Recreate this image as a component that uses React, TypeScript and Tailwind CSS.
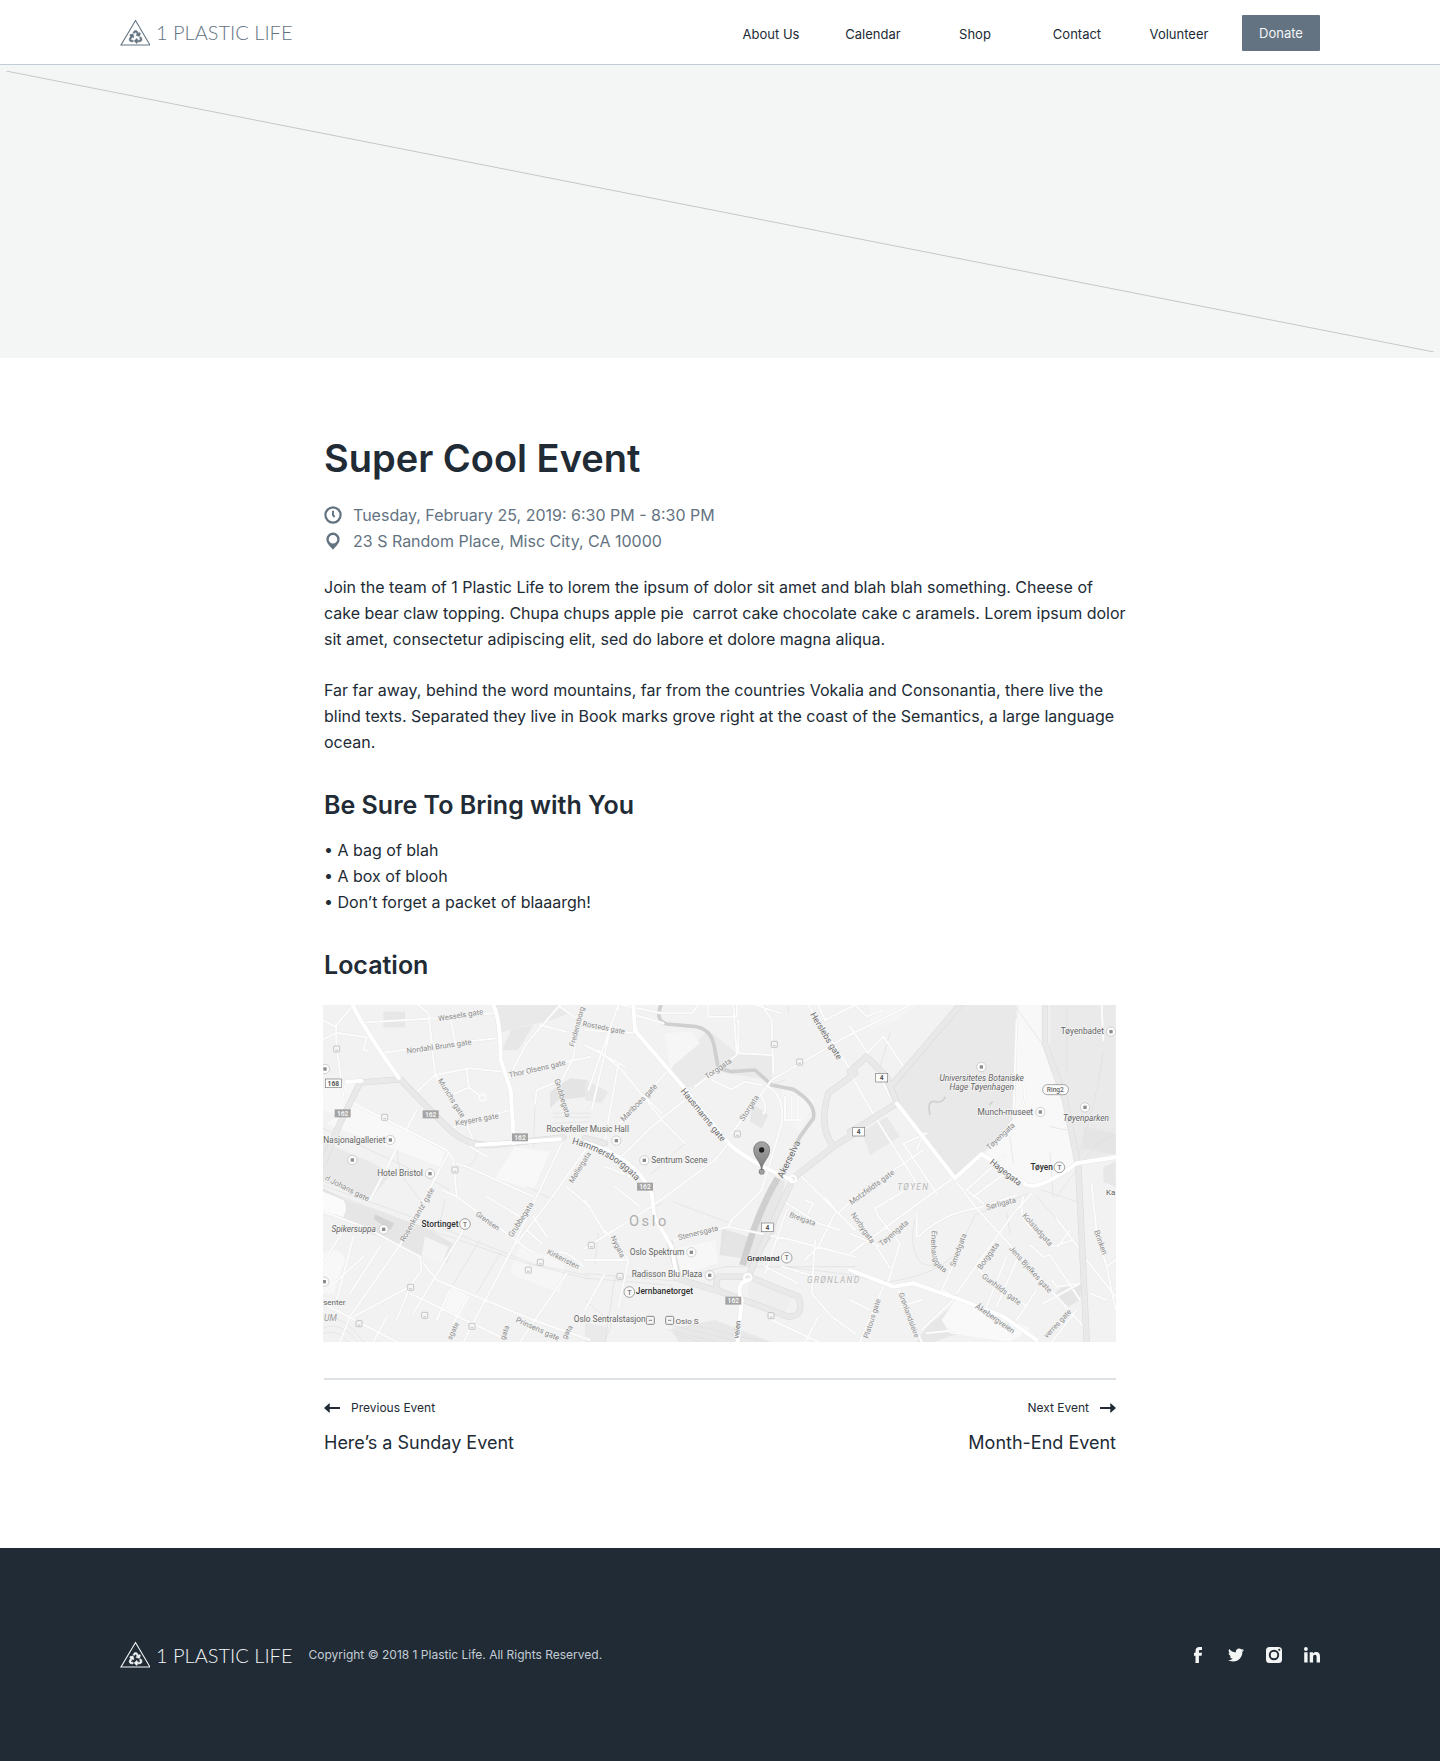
import type { ReactNode } from "react";
import { FaTwitter } from "react-icons/fa";

const NAV = ["About Us", "Calendar", "Shop", "Contact", "Volunteer"];

/* ---------- Brand ---------- */

function Logo({ className }: { className: string }) {
  return (
    <a href="#home" className={`flex items-center gap-[6px] ${className}`}>
      <svg viewBox="0 0 30 27" className="h-[27px] w-[30px]" aria-hidden="true">
        <path d="M15.500 1.500 30 26H1Z" fill="none" stroke="currentColor" strokeWidth="1.1" />
        <g transform="translate(9.2 11.600) scale(0.025)">
          <path
            fill="currentColor"
            stroke="currentColor"
            strokeWidth="26"
            d="M184.561 261.903c3.232 13.997-12.123 24.635-24.068 17.168l-40.736-25.455-50.867 81.402C55.606 356.273 70.96 384 96.012 384H148c6.627 0 12 5.373 12 12v40c0 6.627-5.373 12-12 12H96.115c-75.334 0-121.302-83.048-81.408-146.88l50.822-81.388-40.725-25.448c-12.081-7.547-8.966-25.961 4.879-29.158l110.237-25.45c8.611-1.988 17.201 3.381 19.189 11.99l25.452 110.237zm98.561-182.915l41.289 66.076-40.74 25.457c-12.051 7.528-9 25.953 4.879 29.158l110.237 25.45c8.672 1.999 17.215-3.438 19.189-11.99l25.45-110.237c3.197-13.844-11.99-24.719-24.068-17.168l-40.687 25.424-41.263-66.082c-37.521-60.033-125.209-60.171-162.816 0l-17.963 28.766c-3.51 5.62-1.8 13.021 3.82 16.533l33.919 21.195c5.62 3.512 13.024 1.803 16.536-3.817l17.961-28.743c12.712-20.341 41.973-19.676 54.257-.022zM497.288 301.12l-27.515-44.065c-3.511-5.623-10.916-7.334-16.538-3.821l-33.861 21.159c-5.62 3.512-7.33 10.915-3.818 16.536l27.564 44.112c13.257 21.211-2.057 48.96-27.136 48.96H320V336.02c0-14.213-17.242-21.383-27.313-11.313l-80 79.981c-6.249 6.248-6.249 16.379 0 22.627l80 79.989C302.689 517.308 320 510.3 320 495.989V448h95.88c75.274 0 121.335-82.997 81.408-146.88z"
          />
        </g>
      </svg>
      <span className="font-['Lato'] text-[20px] leading-[26px] font-light whitespace-nowrap">1 PLASTIC LIFE</span>
    </a>
  );
}

/* ---------- Icons ---------- */

function ClockIcon() {
  return (
    <svg viewBox="0 0 18 18" className="size-[18px] shrink-0" fill="none" stroke="currentColor" aria-hidden="true">
      <circle cx="9" cy="9" r="7.6" strokeWidth="2.2" />
      <path d="M9 4.8V9.2L10.6 11" strokeWidth="1.9" />
    </svg>
  );
}

function PlaceIcon() {
  return (
    <svg viewBox="0 0 18 18" className="size-[18px] shrink-0" fill="currentColor" aria-hidden="true">
      <path
        fillRule="evenodd"
        d="M9 .6A6.600 6.600 0 0 0 2.400 7.200C2.400 11.200 5.600 13.600 9 17.800 12.400 13.600 15.600 11.200 15.600 7.200A6.600 6.600 0 0 0 9 .6ZM9 2.900A4.300 4.300 0 1 1 9 11.500 4.300 4.300 0 0 1 9 2.900Z"
      />
    </svg>
  );
}

function ArrowIcon({ flip = false }: { flip?: boolean }) {
  return (
    <svg viewBox="0 0 16 10" className="h-[10px] w-[16px] shrink-0" fill="currentColor" aria-hidden="true">
      <path
        d={
          flip
            ? "M16 5 10.400 0Q10 2 10.400 4H0V6H10.400Q10 8 10.400 10Z"
            : "M0 5 5.600 0Q6 2 5.600 4H16V6H5.600Q6 8 5.600 10Z"
        }
      />
    </svg>
  );
}

function FacebookIcon() {
  return (
    <svg viewBox="0 0 16 16" className="size-4" fill="currentColor" aria-hidden="true">
      <path d="M5.500 16V8.700H4V5.800H5.500V4C5.500 1.400 6.900 0 9.300 0H12V2.900H10.200C9.300 2.900 8.900 3.300 8.900 4.100V5.800H12L11.600 8.700H8.900V16Z" />
    </svg>
  );
}

function InstagramIcon() {
  return (
    <svg viewBox="0 0 16 16" className="size-4" fill="currentColor" aria-hidden="true">
      <path
        fillRule="evenodd"
        d="M3.500 0H12.500A3.500 3.500 0 0 1 16 3.500V12.500A3.500 3.500 0 0 1 12.500 16H3.500A3.500 3.500 0 0 1 0 12.500V3.500A3.500 3.500 0 0 1 3.500 0ZM8 2.800A5.200 5.200 0 1 0 8 13.200 5.200 5.200 0 0 0 8 2.800ZM13.300 1.700A1.100 1.100 0 1 0 13.300 3.900 1.100 1.100 0 0 0 13.300 1.700Z"
      />
      <circle cx="8" cy="8" r="3.300" />
    </svg>
  );
}

function LinkedInIcon() {
  return (
    <svg viewBox="0 0 16 16" className="size-4" fill="currentColor" aria-hidden="true">
      <circle cx="1.900" cy="2" r="1.900" />
      <path d="M.2 5.200H3.600V15.400H.2ZM5.700 5.200H8.900V6.600C9.500 5.600 10.600 4.900 12.100 4.900 15 4.900 16 6.700 16 9.400V15.400H12.600V9.900C12.600 8.600 12.200 7.800 11 7.800 9.700 7.800 9.100 8.700 9.100 10V15.400H5.700Z" />
    </svg>
  );
}

/* ---------- Map ---------- */

const SHEETS = [0, 795, 1590];

type Shape = [string, string];

const AREAS: Shape[][] = [
  [
    ["M520 15H722L745 40 690 62 640 72 575 88 535 100Z", "#e9e9e9"],
    ["M575 88 640 75 595 150H545Z", "#e7e7e7"],
    ["M190 35H255V82H190Z", "#e7e7e7"],
    ["M55 345 95 300 375 455 360 500 230 450 20 372Z", "#f8f8f8"],
    ["M9 265 110 250 60 350 9 330Z", "#f7f7f7"],
    ["M9 425 160 490 215 520 150 600 9 545Z", "#e9e9e9"],
    ["M9 565 80 600 330 690 405 735 380 790 300 765 150 700 9 625Z", "#e6e6e6"],
    ["M9 575 70 600Q85 620 70 652L9 632Z", "#fbfbfb"],
    ["M165 643 222 670 212 690 162 658Z", "#d4d4d4"],
    ["M315 710 385 740 365 795 305 765Z", "#f4f4f4"],
    ["M585 440 690 455 640 570 525 535Z", "#f8f8f8"],
    ["M690 275 750 235 803 240V290L715 300 690 325Z", "#e4e4e4"],
    ["M600 735 735 790 720 880 570 820Z", "#f6f6f6"],
    ["M9 760Q60 735 75 780L40 880H9Z", "#f8f8f8"],
    ["M395 860 450 890 420 950 370 930Z", "#f8f8f8"],
  ],
  [
    ["M0 240 70 275 50 310 0 300Z", "#e8e8e8"],
    ["M250 205 330 130 370 90 450 155 565 165 560 240 500 232 400 215 330 262H290Z", "#eaeaea"],
    ["M240 100 320 95 345 130 255 205Z", "#f6f6f6"],
    ["M500 310 550 345 530 385 495 365Z", "#e7e7e7"],
    ["M410 685 490 710 470 775 405 765Z", "#e5e5e5"],
    ["M600 545 570 700 495 800 460 795 520 650 580 535Z", "#e7e7e7"],
    ["M255 750 390 720 400 790 270 830Z", "#f7f7f7"],
    ["M490 845 625 885 600 935 490 910Z", "#eeeeee"],
    ["M260 985 390 960 560 1026H280Z", "#e8e8e8"],
    ["M0 970 70 980 60 1026H0Z", "#eaeaea"],
    ["M590 250 690 300 640 400 590 330Z", "#f5f5f5"],
  ],
  [
    ["M330 15H500L495 350 480 400 395 460 315 530 150 310 130 255Z", "#e9e9e9"],
    ["M505 15H578L585 130 645 300 680 490 560 560 520 545 400 465 495 350Z", "#f8f8f8"],
    ["M600 15H797V460L690 485 660 320 600 140Z", "#eaeaea"],
    ["M760 500 797 485V560L760 545Z", "#e7e7e7"],
    ["M35 395 110 350 150 410 60 465Z", "#e9e9e9"],
    ["M60 15H200L140 60 60 90Z", "#f5f5f5"],
    ["M230 980 330 900 480 960 420 1005 330 1000 250 1026H200Z", "#e7e7e7"],
    ["M320 895 540 985 480 1026 300 1000 275 960Z", "#f9f9f9"],
    ["M615 880Q650 840 695 850L690 900 655 920Z", "#e5e5e5"],
    ["M700 380 797 400V465L700 445Z", "#e5e5e5"],
  ],
];

const THIN = [
  "M9 570 330 690 620 790 810 838 M9 556 335 672 640 792 810 828 M50 110 65 260 M9 385 300 520 390 570 M230 440 240 520 300 600 M440 500Q480 480 470 440 M375 600 365 650 330 700 M645 320 640 440 M480 720 395 860 M540 760 470 880 M620 560 700 600 M9 985Q60 960 115 1026 M9 1000Q50 985 85 1026 M700 340H810 M700 352H810 M700 370 810 365 M15 950Q80 950 130 1026",
  "M0 820 260 842 420 800 810 800 M0 834 260 856 M265 606 430 668 M300 430 200 520 M610 20V40 M260 960 540 1026 M255 975 470 1026 M250 990 400 1026 M0 900 80 970 60 1026 M90 830 60 1026 M420 690 405 765 M600 800 810 826 M40 700 30 790 M170 640 230 610 M540 260 600 240 M260 1000 350 1026",
  "M500 25 575 130 M0 830 120 845Q300 820 340 720L375 645 535 580 M797 405 740 430 620 590 M760 160Q730 350 680 480 M575 570 680 605 M480 410 490 490 M600 380 650 390 M610 590 600 460 M200 640Q170 740 215 790L290 810 M120 100 90 200 M650 20V220 M470 640 480 700 M745 440 797 380 M560 590 640 680",
];

const STREETS = [
  "M9 60 45 80 100 15 M48 80 50 140 70 290 M9 118 50 98 140 112 130 150 145 152 M105 15 118 68 350 55 520 40 M185 160 345 135 530 115 M295 15 325 40 330 80 345 225 280 285 M345 225 450 205 550 215 M345 225 395 285 447 262 440 210 M447 262 480 287 M390 50 405 125 M350 240 435 360 465 435 M400 382 570 330 M720 15 620 130 565 235 645 215 720 190 810 170 M720 20 775 60 760 175 725 240 650 270 645 310 M660 75 740 95 M80 300 380 450 400 480 410 590 640 760 M150 600 290 330 M240 735 385 460 M450 440 500 470 M410 490 440 500 640 590 M365 570 410 590 M9 635 130 680 300 770 305 810 270 860 100 950 M310 790 350 840 640 960 810 1020 M240 735 90 950 60 1026 M430 690 280 940 M725 430 580 740 430 1026 M810 430 690 600 590 730 M740 820 600 1026 M65 700 9 790 M100 710 50 900 M130 770 9 880 M180 740 90 880 M270 860 230 960 M270 880 560 1020 M640 650 680 710 M620 690 665 730 M740 560 810 620 M500 590 600 650 M390 870 350 960 M445 890 400 970 M660 787Q720 720 790 800 M200 950 160 1026 M9 910 230 1026",
  "M0 90 150 100 M100 15 10 270 M100 15V30 M80 70 20 330 M0 135 120 200 M40 150 110 210 240 370 300 430 M100 190 60 420 M100 375 260 200 M180 290 230 340 M110 15 230 40H320L340 15 M150 45 235 70 M370 15V50H455V15 M530 15 560 60 M460 60V160L560 165 M330 260 455 165 M380 240 440 268 480 245 530 255 M440 400 560 240 810 95 M445 15 455 160 M560 60 565 220 M510 15 590 40 M670 15 800 215 M550 260Q600 290 590 370L555 490 M430 430 390 480 200 620 0 745 M555 490 530 570 440 660 430 680 M110 470 200 380 300 300 M110 470 60 440 M90 560 165 620 M0 600 60 700 M130 780 60 690 M60 500 160 540 M270 720 430 680 620 720 810 770 M590 600 700 670 765 690 M660 600 685 610 670 640 M605 630 540 820 M750 640 700 740 660 780 M540 800 640 850 M600 290V360H650 M620 290V360 M638 290V360 M530 290Q550 330 535 340 M640 520 720 600 810 690 M720 590 760 640 810 590 M0 780 130 780 120 830 100 920 M0 930 60 820 M690 720 680 880 740 950 810 1000 M700 950 660 1026 M590 800 690 830 M560 960 700 1026 M700 15 720 60 810 15",
  "M0 105 180 15 M15 15 50 50 100 30 M0 80 60 170 130 310 M160 200 100 110 50 160 M0 220 75 350 200 550 M0 600 220 450 M75 625 200 550 M75 625 85 650 150 730 110 860 M315 530 0 760 M200 640V710 M205 710Q280 640 380 625 M315 540 380 625 710 990 M350 570 460 470 M370 590 480 510 M350 570 400 610 M380 625 500 585 M160 430 260 580 M160 430 230 400 M0 700 90 740 M80 740 120 805 M490 640 320 880 M490 640 545 580 M520 590Q500 650 550 690L610 740 670 720 M470 770 410 920 M500 780 440 920 M560 870 500 960 M345 720 275 870 300 880 M540 735 580 770 600 765 690 900 M385 810 530 920 M690 750 620 655 M580 910 690 850 M605 1026 680 930 M725 550 740 700 770 800 797 930 M710 780 797 890 M770 800 797 780 M720 880 770 900 M0 900 60 930 M100 860 30 1026 M145 870 215 1026 M150 920 215 900 M320 890 215 990 M230 1000 320 990 M605 840 620 860 690 850 M500 60 490 350 M755 15 760 120 M520 260Q540 300 490 350 M660 690 625 740 M200 450 220 400",
];

const HIGHWAYS = [
  "M9 490 60 370 120 248 240 238 385 385Q440 440 520 435L730 412",
  "M0 415 60 430 M810 220 730 280Q700 380 745 440L630 530 M745 440 810 400 M620 545 530 740 490 830 400 830Q380 870 420 880L610 950Q660 950 640 890L490 830 M275 835 420 880 M255 730 280 830",
  "M330 15 130 250 M0 215 50 170 110 230 140 310 30 380 0 395 M585 15V130L645 300 685 500 710 1026",
];

const MAJOR = [
  "M98 15Q140 100 237 234 M520 15Q542 60 542 180L572 270 582 430 M80 246 125 242 M470 435 720 418",
  "M145 15 150 92 290 255 430 430Q490 485 620 540 M0 428Q150 470 200 580 M200 580 208 650 260 740 275 830 M490 840Q450 850 470 900L458 1026",
  "M140 310 315 535 395 462 530 555Q570 570 680 490L797 472 M0 810 130 860 190 850 320 895 460 950 560 1020",
];

type Tone = "street" | "place" | "dark" | "road" | "area";
type Label = [string, number, number, number, number, Tone, boolean?];

const LABELS: Label[][] = [
  [
    ["Wessels gate", 423, 53, -9, 23, "street"],
    ["Nordahl Bruns gate", 358, 147, -8, 23, "street"],
    ["Thor Olsens gate", 653, 214, -13, 23, "street"],
    ["Fredensborg", 778, 82, -75, 22, "street"],
    ["Munchs gate", 388, 298, 58, 23, "street"],
    ["Keysers gate", 472, 366, -10, 23, "street"],
    ["Grubbegata", 720, 296, 73, 23, "street"],
    ["Rockefeller Music Hall", 803, 396, 0, 25, "place"],
    ["Møllergata", 786, 506, -58, 22, "street"],
    ["Nasjonalgalleriet", 103, 428, 0, 25, "place"],
    ["Hotel Bristol", 240, 529, 0, 25, "place"],
    ["rl Johans gate", 78, 572, 27, 23, "street"],
    ["Rosenkrantz’ gate", 298, 648, -60, 23, "street"],
    ["Grensen", 499, 669, 35, 22, "street"],
    ["Grubbegata", 609, 663, -57, 23, "street"],
    ["Stortinget", 360, 680, 0, 25, "dark"],
    ["Spikersuppa", 101, 696, 0, 25, "place", true],
    ["Kirkeristen", 726, 784, 27, 22, "street"],
    ["senter", 43, 915, 0, 24, "place"],
    ["UM", 31, 962, 0, 26, "area", true],
    ["Prinsens gate", 650, 994, 24, 23, "street"],
    ["gata", 748, 1000, -60, 22, "street"],
    ["gata", 561, 1000, -70, 22, "street"],
    ["sgate", 406, 996, -65, 22, "street"],
    ["Oslo Sentralstasjon", 869, 967, 0, 25, "place"],
  ],
  [
    ["Rosteds gate", 55, 90, 11, 22, "street"],
    ["Mariboes gate", 167, 313, -46, 23, "street"],
    ["Hausmanns gate", 348, 350, 51, 26, "road"],
    ["Torggata", 404, 212, -34, 23, "street"],
    ["Storgata", 499, 328, -57, 23, "street"],
    ["Herslebs gate", 716, 112, 59, 26, "road"],
    ["Sentrum Scene", 283, 489, 0, 25, "place"],
    ["Akerselva", 620, 482, -64, 28, "road"],
    ["Stenersgata", 341, 706, -14, 23, "street"],
    ["Nygata", 92, 743, 63, 22, "street"],
    ["Breigata", 650, 664, 20, 22, "street"],
    ["Oslo Spektrum", 216, 764, 0, 25, "place"],
    ["Grønland", 535, 782, 0, 24, "dark"],
    ["Radisson Blu Plaza", 246, 832, 0, 25, "place"],
    ["Jernbanetorget", 238, 882, 0, 25, "dark"],
    ["Oslo S", 306, 972, 0, 24, "place"],
    ["veien", 464, 990, -82, 23, "road"],
  ],
  [
    ["Tøyenbadet", 697, 103, 0, 25, "place"],
    ["Universitetes Botaniske", 395, 243, 0, 25, "place", true],
    ["Hage Tøyenhagen", 395, 270, 0, 25, "place", true],
    ["Munch-museet", 466, 344, 0, 25, "place"],
    ["Tøyenparken", 708, 364, 0, 25, "place", true],
    ["Tøyengata", 457, 414, -43, 23, "street"],
    ["Hagegata", 462, 524, 38, 26, "road"],
    ["Tøyen", 575, 511, 0, 25, "dark"],
    ["Sørligata", 455, 618, -15, 23, "street"],
    ["Motzfeldts gate", 70, 568, -36, 23, "street"],
    ["Norbygata", 32, 688, 55, 23, "street"],
    ["Tøyengata", 136, 705, -40, 23, "street"],
    ["Smedgata", 332, 753, -70, 23, "street"],
    ["Borggata", 421, 772, -54, 23, "street"],
    ["Kolstadgata", 557, 694, 48, 23, "street"],
    ["Jens Bjelkes gate", 536, 813, 48, 23, "street"],
    ["Gunhilds gate", 450, 874, 37, 23, "street"],
    ["Åkebergveien", 431, 962, 35, 23, "street"],
    ["Grønlandsleire", 170, 948, 70, 22, "street"],
    ["Platous gate", 73, 958, -72, 22, "street"],
    ["verres gate", 628, 976, -47, 22, "street"],
    ["Brinken", 745, 730, 70, 23, "street"],
    ["Ka", 782, 586, 0, 24, "place"],
  ],
];

const TONES: Record<Tone, string> = {
  street: "#8c8c8c",
  place: "#636363",
  dark: "#2f2f2f",
  road: "#6c6c6c",
  area: "#9a9a9a",
};

const STOPS: [number, number][] = [
  [50, 147], [194, 352], [405, 510], [661, 787], [625, 810], [272, 862], [314, 946], [117, 971], [456, 979],
  [1363, 133], [1439, 186], [1252, 402], [814, 736], [900, 829], [1353, 947],
];

const POIS: [number, number][] = [
  [15, 207], [211, 420], [97, 480], [330, 521], [191, 688], [13, 845],
  [889, 422], [973, 481], [1114, 757], [1169, 826],
  [1984, 201], [2373, 95], [2161, 336], [2295, 322],
];

const METROS: [number, number][] = [[435, 672], [1400, 773], [928, 876], [2218, 502]];
const SHIELDS: [number, number][] = [[68, 340], [332, 343], [600, 412], [975, 560], [1240, 902]];
const ROUTES: [string, number, number][] = [["168", 40, 250], ["4", 1342, 682], ["4", 1616, 395], ["4", 1685, 233]];

function Sheets({ children }: { children: (sheet: number) => ReactNode }) {
  return (
    <>
      {SHEETS.map((dx, i) => (
        <g key={dx} transform={`translate(${dx} 0)`}>
          {children(i)}
        </g>
      ))}
    </>
  );
}

function CityMap() {
  return (
    <svg
      viewBox="9 15 2379 1011"
      className="block h-auto w-full font-['Roboto']"
      role="img"
      aria-label="Map of central Oslo with the event location marked"
    >
      <defs>
        <linearGradient id="pin" x1="0" y1="0" x2="0" y2="1">
          <stop offset="0" stopColor="#a6a6a6" />
          <stop offset="1" stopColor="#7c7c7c" />
        </linearGradient>
        <path id="hammersborggata" d="M744 428Q880 460 956 552" />
        <path id="enerhauggata" d="M1837 686Q1820 800 1880 820" />
      </defs>
      <rect x="9" y="15" width="2379" height="1011" fill="#f2f2f2" />

      <Sheets>{(s) => AREAS[s].map(([d, fill]) => <path key={d} d={d} fill={fill} />)}</Sheets>

      <g fill="none" stroke="#cfcfcf" strokeLinejoin="round">
        <path
          strokeWidth="11"
          d="M1023 15Q1005 62 1040 72L1130 80Q1175 90 1183 140L1195 205 1235 215 1305 210 1355 255 1420 268Q1490 310 1480 355L1440 410 1385 520"
        />
        <path strokeWidth="20" d="M1373 535Q1310 640 1268 795" />
        <path strokeWidth="5" d="M1830 345Q1820 300 1845 305T1875 290M2008 315 2018 305" />
      </g>

      <g fill="none" strokeLinejoin="round" strokeLinecap="round">
        <Sheets>{(s) => <path d={THIN[s]} stroke="#e0e0e0" strokeWidth="2" />}</Sheets>
        <Sheets>{(s) => <path d={STREETS[s]} stroke="#e6e6e6" strokeWidth="8" />}</Sheets>
        <Sheets>{(s) => <path d={STREETS[s]} stroke="#fcfcfc" strokeWidth="6" />}</Sheets>
        <Sheets>{(s) => <path d={HIGHWAYS[s]} stroke="#d9d9d9" strokeWidth="19" />}</Sheets>
        <Sheets>{(s) => <path d={HIGHWAYS[s]} stroke="#e9e9e9" strokeWidth="16" />}</Sheets>
        <Sheets>{(s) => <path d={MAJOR[s]} stroke="#e4e4e4" strokeWidth="14" />}</Sheets>
        <Sheets>{(s) => <path d={MAJOR[s]} stroke="#ffffff" strokeWidth="12" />}</Sheets>
        <circle cx="488" cy="293" r="10" stroke="#fcfcfc" strokeWidth="5" />
        <circle cx="1418" cy="537" r="10" stroke="#ffffff" strokeWidth="6" />
        <circle cx="1283" cy="833" r="11" stroke="#ffffff" strokeWidth="6" />
      </g>

      {STOPS.map(([x, y]) => (
        <g key={`${x}-${y}`} fill="#f6f6f6" stroke="#adadad" strokeWidth="2">
          <rect x={x - 9} y={y - 9} width="18" height="18" rx="2" />
          <path d={`M${x - 4} ${y + 4}H${x + 4}`} />
        </g>
      ))}

      {POIS.map(([x, y]) => (
        <g key={`${x}-${y}`}>
          <circle cx={x} cy={y} r="14" fill="#fcfcfc" stroke="#bdbdbd" strokeWidth="2" />
          <rect x={x - 5} y={y - 5} width="10" height="10" fill="#8c8c8c" />
        </g>
      ))}

      {[991, 1049].map((x) => (
        <g key={x} stroke="#8a8a8a" strokeWidth="3">
          <rect x={x - 12} y="949" width="24" height="24" rx="3" fill="#f4f4f4" />
          <path d={`M${x - 5} 961H${x + 5}`} />
        </g>
      ))}

      <g stroke="#f5f5f5" strokeWidth="4" paintOrder="stroke" strokeLinejoin="round" textAnchor="middle">
        <Sheets>
          {(s) =>
            LABELS[s].map(([text, x, y, angle, size, tone, italic]) => (
              <text
                key={`${text}-${x}`}
                transform={`translate(${x} ${y}) rotate(${angle})`}
                fontSize={size}
                fontStyle={italic ? "italic" : "normal"}
                fontWeight={tone === "dark" ? 500 : 400}
                fill={TONES[tone]}
              >
                {text}
              </text>
            ))
          }
        </Sheets>
        <text fontSize="27" fill="#6c6c6c">
          <textPath href="#hammersborggata" startOffset="50%">Hammersborggata</textPath>
        </text>
        <text fontSize="23" fill="#8c8c8c">
          <textPath href="#enerhauggata" startOffset="50%">Enerhauggata</textPath>
        </text>
        <text x="987" y="679" fontSize="44" className="tracking-[8px]" fill="#adadad">Oslo</text>
        <text x="1780" y="571" fontSize="25" fontStyle="italic" className="tracking-[4px]" fill="#b5b5b5">TØYEN</text>
        <text x="1541" y="849" fontSize="25" fontStyle="italic" className="tracking-[4px]" fill="#b5b5b5">GRØNLAND</text>
      </g>

      <g textAnchor="middle">
        {METROS.map(([x, y]) => (
          <g key={x}>
            <circle cx={x} cy={y} r="16" fill="#fafafa" stroke="#777777" strokeWidth="2" />
            <text x={x} y={y + 8} fontSize="22" fill="#555555">T</text>
          </g>
        ))}
        {SHIELDS.map(([x, y]) => (
          <g key={x}>
            <rect x={x - 24} y={y - 12} width="48" height="24" fill="#a3a3a3" />
            <text x={x} y={y + 7} fontSize="20" fontWeight="700" fill="#f4f4f4">162</text>
          </g>
        ))}
        {ROUTES.map(([text, x, y]) => {
          const w = text.length > 1 ? 48 : 36;
          return (
            <g key={x}>
              <rect x={x - w / 2} y={y - 13} width={w} height="26" fill="#fdfdfd" stroke="#7d7d7d" strokeWidth="2" />
              <text x={x} y={y + 7} fontSize="20" fontWeight="700" fill="#555555">{text}</text>
            </g>
          );
        })}
        <rect x="2168" y="254" width="77" height="30" rx="14" fill="#fcfcfc" stroke="#7d7d7d" strokeWidth="2" />
        <text x="2206" y="276" fontSize="20" fontWeight="500" fill="#666666">Ring2</text>
      </g>

      <circle cx="1325" cy="515" r="8" fill="#a0a0a0" stroke="#707070" strokeWidth="2" />
      <path
        d="M1325 510C1322 482 1301 474 1301 449A24 24 0 0 1 1349 449C1349 474 1328 482 1325 510Z"
        fill="url(#pin)"
        stroke="#666666"
        strokeWidth="2"
      />
      <circle cx="1325" cy="450" r="8" fill="#1f1f1f" />
    </svg>
  );
}

/* ---------- Page ---------- */

export default function App() {
  return (
    <div className="flex min-h-screen flex-col bg-white font-['Inter',sans-serif] text-[#212b35]">
      <header className="border-b border-[#c4cdd5]">
        <div className="mx-auto flex h-16 max-w-[1200px] items-center justify-between">
          <Logo className="text-[#637381]" />
          <div className="flex items-center gap-3 pt-[2px]">
            <nav className="flex pt-[2px]">
              {NAV.map((item) => (
                <a key={item} href={`#${item}`} className="w-[102px] text-center text-[13px] leading-5">
                  {item}
                </a>
              ))}
            </nav>
            <button type="button" className="h-9 w-[78px] rounded-[1px] bg-[#637381] text-[13px] leading-5 text-[#f4f6f8]">
              Donate
            </button>
          </div>
        </div>
      </header>

      <div className="h-[293px] bg-[#f4f6f5] p-[6px]">
        <svg viewBox="0 0 100 100" preserveAspectRatio="none" className="size-full" aria-hidden="true">
          <path d="M0 0 100 100" stroke="#c3c8ca" strokeWidth="1" vectorEffect="non-scaling-stroke" />
        </svg>
      </div>

      <main className="mx-auto w-full max-w-[792px] grow pt-[76px] pb-[91px]">
        <h1 className="text-[38px] leading-[48px] font-semibold">Super Cool Event</h1>

        <div className="mt-5 text-[16px] leading-[26px] text-[#637381]">
          <p className="flex items-center gap-[11px]">
            <ClockIcon />
            Tuesday, February 25, 2019: 6:30 PM - 8:30 PM
          </p>
          <p className="flex items-center gap-[11px]">
            <PlaceIcon />
            23 S Random Place, Misc City, CA 10000
          </p>
        </div>

        <div className="mt-5 -mr-6 flex flex-col gap-[25px] text-[16px] leading-[26px]">
          <p>
            Join the team of 1 Plastic Life to lorem the ipsum of dolor sit amet and blah blah something. Cheese of
            <br />
            cake bear claw topping. Chupa chups apple pie &nbsp;carrot cake chocolate cake c aramels. Lorem ipsum dolor
            sit amet, consectetur adipiscing elit, sed do labore et dolore magna aliqua.
          </p>
          <p>
            Far far away, behind the word mountains, far from the countries Vokalia and Consonantia, there live the
            <br />
            blind texts. Separated they live in Book marks grove right at the coast of the Semantics, a large language
            ocean.
          </p>
        </div>

        <h2 className="mt-8 text-[25px] leading-9 font-semibold">Be Sure To Bring with You</h2>
        <ul className="mt-[14px] text-[16px] leading-[26px]">
          <li>• A bag of blah</li>
          <li>• A box of blooh</li>
          <li>• Don’t forget a packet of blaaargh!</li>
        </ul>

        <h2 className="mt-8 text-[25px] leading-9 font-semibold">Location</h2>
        <div className="mt-[22px] -ml-px">
          <CityMap />
        </div>

        <div className="mt-9 flex justify-between border-t-2 border-[#dfe3e8] pt-[18px]">
          <a href="#previous" className="flex flex-col gap-[11px]">
            <span className="flex items-center gap-[11px] text-[12px] leading-5">
              <ArrowIcon />
              Previous Event
            </span>
            <span className="text-[18px] leading-7">Here’s a Sunday Event</span>
          </a>
          <a href="#next" className="flex flex-col items-end gap-[11px]">
            <span className="flex items-center gap-[11px] text-[12px] leading-5">
              Next Event
              <ArrowIcon flip />
            </span>
            <span className="text-[18px] leading-7">Month-End Event</span>
          </a>
        </div>
      </main>

      <footer className="bg-[#212b35]">
        <div className="mx-auto flex h-[213px] max-w-[1200px] items-center justify-between">
          <div className="flex items-center gap-4">
            <Logo className="text-[#f4f6f8]" />
            <p className="text-[12px] leading-5 text-[#c4cdd5]">Copyright © 2018 1 Plastic Life. All Rights Reserved.</p>
          </div>
          <div className="flex items-center gap-[22px] text-[#f4f6f5]">
            <a href="#facebook" aria-label="Facebook">
              <FacebookIcon />
            </a>
            <a href="#twitter" aria-label="Twitter">
              <FaTwitter className="size-4" />
            </a>
            <a href="#instagram" aria-label="Instagram">
              <InstagramIcon />
            </a>
            <a href="#linkedin" aria-label="LinkedIn">
              <LinkedInIcon />
            </a>
          </div>
        </div>
      </footer>
    </div>
  );
}
